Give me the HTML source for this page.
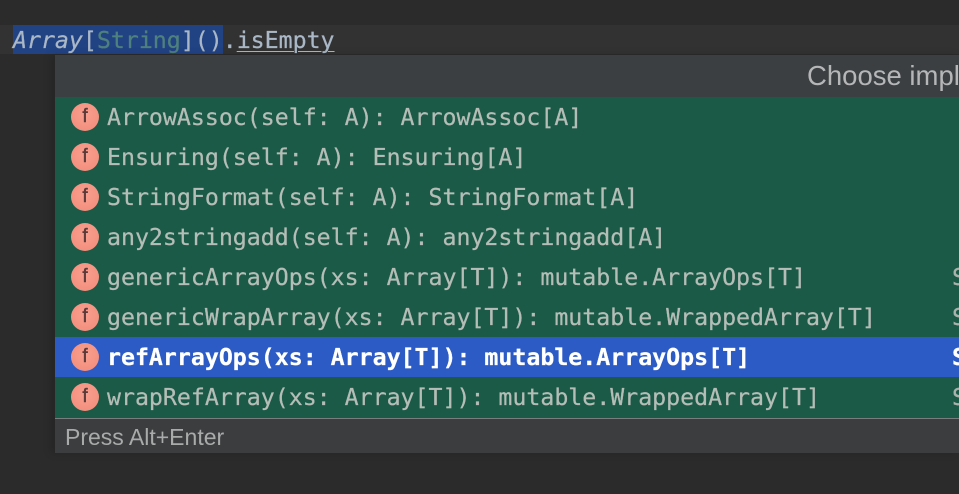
<!DOCTYPE html>
<html>
<head>
<meta charset="utf-8">
<style>
html,body{margin:0;padding:0;width:959px;height:494px;overflow:hidden;background:#2b2b2b;}
.abs{position:absolute;}
.mono{font-family:"DejaVu Sans Mono","Liberation Mono",monospace;font-size:23.23px;letter-spacing:0;white-space:pre;line-height:40px;-webkit-text-stroke:0.25px currentColor;}
.row{position:absolute;left:55px;width:904px;height:40px;color:#b5bdb7;}
.row .t{position:absolute;left:52px;top:1px;}
.row .s{position:absolute;left:897px;top:1px;color:#a9b3ad;}
.ic{position:absolute;left:16px;top:6px;width:28px;height:28px;border-radius:50%;background:radial-gradient(circle at 50% 40%,#f9a090 0,#f4907f 70%,#ea8572 100%);color:#5a3a38;font-family:"Liberation Sans",sans-serif;font-size:19px;font-weight:normal;line-height:27px;text-align:center;-webkit-text-stroke:0.4px #5a3a38;}
.sel{background:#2c5bc6;color:#fff;font-weight:bold;}
.sel .s{color:#fff;}
</style>
</head>
<body>
<div class="abs" style="left:0;top:0;width:959px;height:25px;background:#2b2b2b;"></div>
<div class="abs" style="left:0;top:25px;width:959px;height:29px;background:#323232;"></div>
<div class="abs" style="left:13px;top:25px;width:210px;height:29px;background:#214283;"></div>
<div class="abs mono" style="left:13px;top:25px;line-height:32px;color:#a9b7c6;"><span style="font-style:italic;">Array</span>[<span style="color:#4e807d;">String</span>]().<span style="text-decoration:underline;text-underline-offset:3px;text-decoration-thickness:1px;">isEmpty</span></div>

<div class="abs" style="left:55px;top:55px;width:904px;height:398px;box-shadow:-4px 0 8px rgba(0,0,0,.15);"></div>
<div class="abs" style="left:55px;top:55px;width:904px;height:42px;background:#3c3f41;"></div>
<div class="abs" style="left:807px;top:55px;height:42px;font:27.5px/42px 'Liberation Sans',sans-serif;color:#b4b6b8;white-space:pre;">Choose impl</div>

<div class="abs" style="left:55px;top:97px;width:904px;height:321px;background:#1a5a47;"></div>

<div class="row mono" style="top:97px;"><span class="ic">f</span><span class="t">ArrowAssoc(self: A): ArrowAssoc[A]</span></div>
<div class="row mono" style="top:137px;"><span class="ic">f</span><span class="t">Ensuring(self: A): Ensuring[A]</span></div>
<div class="row mono" style="top:177px;"><span class="ic">f</span><span class="t">StringFormat(self: A): StringFormat[A]</span></div>
<div class="row mono" style="top:217px;"><span class="ic">f</span><span class="t">any2stringadd(self: A): any2stringadd[A]</span></div>
<div class="row mono" style="top:257px;"><span class="ic">f</span><span class="t">genericArrayOps(xs: Array[T]): mutable.ArrayOps[T]</span><span class="s">S</span></div>
<div class="row mono" style="top:297px;"><span class="ic">f</span><span class="t">genericWrapArray(xs: Array[T]): mutable.WrappedArray[T]</span><span class="s">S</span></div>
<div class="row mono sel" style="top:337px;"><span class="ic">f</span><span class="t">refArrayOps(xs: Array[T]): mutable.ArrayOps[T]</span><span class="s">S</span></div>
<div class="row mono" style="top:377px;"><span class="ic">f</span><span class="t">wrapRefArray(xs: Array[T]): mutable.WrappedArray[T]</span><span class="s">S</span></div>

<div class="abs" style="left:55px;top:418px;width:904px;height:1px;background:#7a7d7d;"></div>
<div class="abs" style="left:55px;top:419px;width:904px;height:34px;background:#3c3d3f;"></div>
<div class="abs" style="left:65px;top:419px;height:36px;font:23px/36px 'Liberation Sans',sans-serif;color:#a9abab;white-space:pre;">Press Alt+Enter</div>
</body>
</html>
